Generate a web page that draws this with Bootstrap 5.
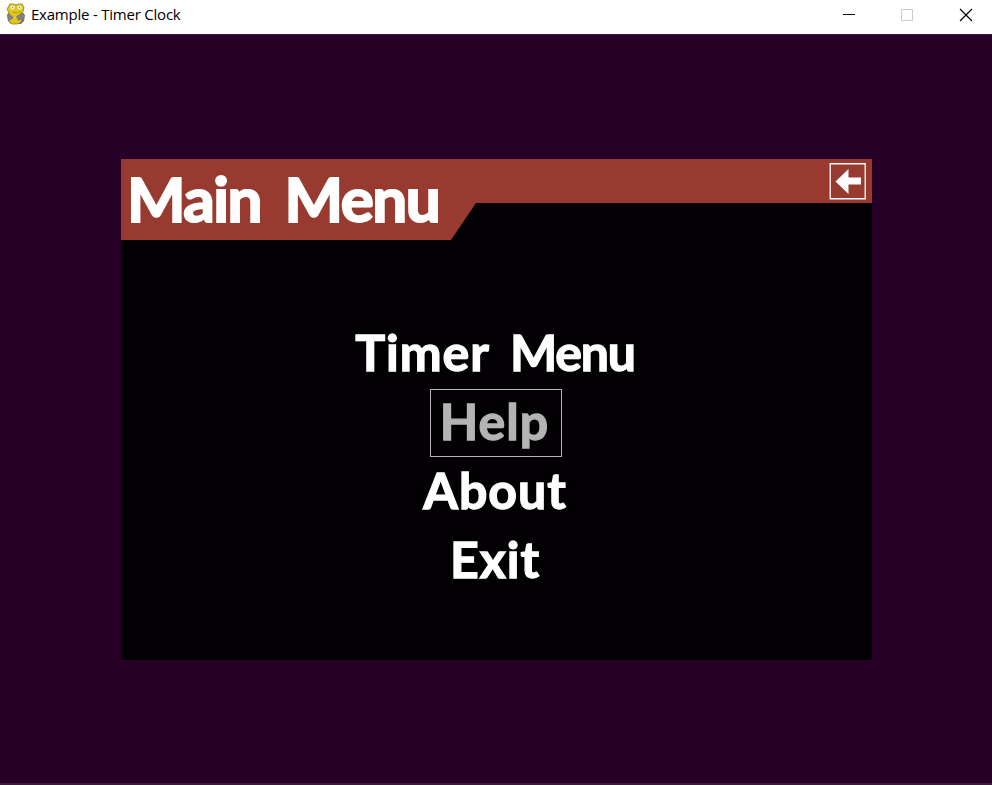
<!DOCTYPE html>
<html lang="en">
<head>
<meta charset="utf-8">
<meta name="viewport" content="width=device-width, initial-scale=1">
<title>Example - Timer Clock</title>
<link href="https://cdn.jsdelivr.net/npm/bootstrap@5.3.0/dist/css/bootstrap.min.css" rel="stylesheet">
<style>
  body { background: #270027; overflow: hidden; height: 785px; }
  .titlebar { height: 34px; flex: none; background: #fff; color: #000; padding-left: 6px; }
  .titlebar .caption { font: 15px/20px "Open Sans", sans-serif; letter-spacing: -.22px; margin: -7px 0 0 5px; white-space: nowrap; }
  .titlebar .app-icon { margin-top: -6px; }
  .winbtns { margin-right: -2px; }
  .winbtn { width: 58px; height: 30px; border: 0; background: none; padding: 0; }
  .stage { border-top: 1px solid #3d1a3d; border-bottom: 2px solid #3b1a3c; padding: 124px 0 0 121px; }
  .menu-window { width: 751px; height: 501px; background: #020003; color: #fff; font-family: Lato, sans-serif; }
  .menu-head { height: 81px; background: #983a2f; clip-path: polygon(0 0, 100% 0, 100% 44px, 355px 44px, 330px 100%, 0 100%); }
  .menu-title { font-size: 62px; font-weight: 700; line-height: 79px; margin: 0 0 0 6px; white-space: nowrap; letter-spacing: -1.500px; word-spacing: 10px; -webkit-text-stroke: 2px currentColor; }
  .back { width: 37px; height: 37px; margin: 4px 6px 0 0; padding: 0; border: 0; background: none; }
  .menu-list { padding-top: 80px; }
  .entry { height: 68px; margin: 0 3px 1px 0; padding: 0 0 3px; border: 1px solid transparent; background: none; color: #fff; font-size: 50px; font-weight: 700; line-height: 61px; white-space: nowrap; letter-spacing: 1px; -webkit-text-stroke: 1.300px currentColor; }
  .e-timer { word-spacing: 8px; }
  .e-timer .second { letter-spacing: -1.200px; }
  .entry.selected { width: 132px; margin-right: 1px; padding-right: 3px; border-color: #b4b4b4; color: #b4b4b4; }
</style>
<script src="https://cdn.jsdelivr.net/npm/bootstrap@5.3.0/dist/js/bootstrap.bundle.min.js"></script>
</head>
<body class="d-flex flex-column m-0">
<header class="titlebar d-flex align-items-center">
  <svg class="app-icon" width="20" height="22" viewBox="0 0 20 22">
    <path d="M3 9 1 12l1 6 3 3h10l3-3 1-6-3-3z" fill="#77736a"/>
    <path d="M4 1h4l2 1 2-1h4l2 3-1 5-3 2-2 2 4 4-2 3-3 1H6l-3-3 2-3-2-5-2-4z" fill="#dfc915" stroke="#8d8426" stroke-width=".8"/>
    <path d="M1 11l6 2v3l-5 1zM10 13l8-3v5l-6 3z" fill="#858080"/>
    <path d="M6 9l5 1 4-2" fill="none" stroke="#b19f1a"/>
    <circle cx="6.500" cy="4.500" r="2.200" fill="#eee9bd"/><circle cx="13.500" cy="4.500" r="2.200" fill="#eee9bd"/>
    <path d="M6 4h1v1H6zM13 4h1v1h-1z" fill="#888"/>
  </svg>
  <span class="caption">Example - Timer Clock</span>
  <div class="winbtns d-flex ms-auto">
    <button class="winbtn" aria-label="Minimize"><svg class="d-block" width="58" height="30"><path d="M23 12.500h12" stroke="#000"/></svg></button>
    <button class="winbtn" aria-label="Maximize"><svg class="d-block" width="58" height="30"><path d="M23.500 7.500h11v11h-11z" fill="none" stroke="#ccc"/></svg></button>
    <button class="winbtn" aria-label="Close"><svg class="d-block" width="58" height="30"><path d="M24 7l12 12M36 7 24 19" stroke="#000" stroke-width="1.200"/></svg></button>
  </div>
</header>
<main class="stage flex-grow-1">
  <section class="menu-window">
    <div class="menu-head d-flex justify-content-between align-items-start">
      <h1 class="menu-title">Main Menu</h1>
      <button class="back" aria-label="Back"><svg class="d-block" width="37" height="37"><path d="M1.200.75h35v35h-35z" fill="none" stroke="#fff" stroke-width="1.300"/><path d="M6.500 18.500 19.500 6v8.500h12.500v7H19.500V31z" fill="#fff"/></svg></button>
    </div>
    <nav class="menu-list d-flex flex-column align-items-center">
      <button class="entry e-timer">Timer <span class="second">Menu</span></button>
      <button class="entry selected">Help</button>
      <button class="entry e-about">About</button>
      <button class="entry e-exit">Exit</button>
    </nav>
  </section>
</main>
</body>
</html>
